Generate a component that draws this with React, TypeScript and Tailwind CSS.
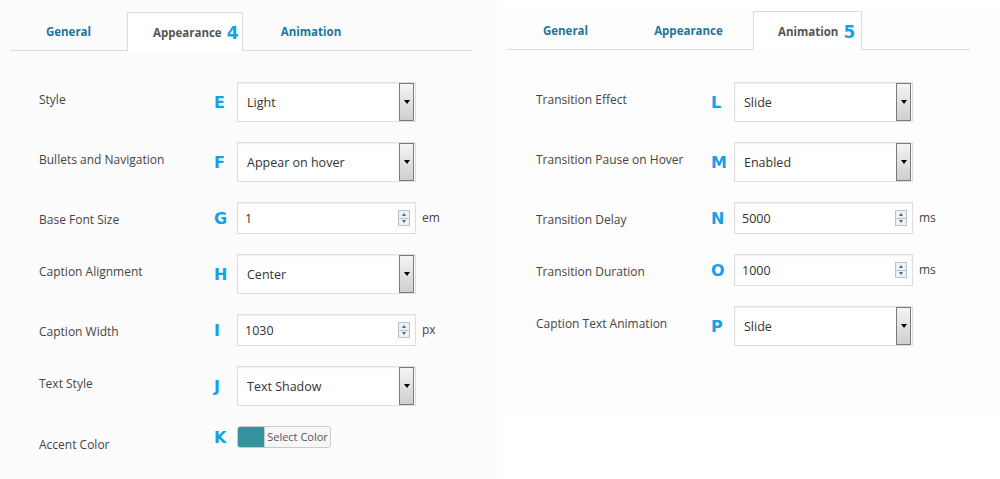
import React from "react";

type Row =
  | { label: string; letter: string; kind: "select"; value: string }
  | { label: string; letter: string; kind: "number"; value: string; unit: string }
  | { label: string; letter: string; kind: "color" };

const appearanceRows: Row[] = [
  { label: "Style", letter: "E", kind: "select", value: "Light" },
  { label: "Bullets and Navigation", letter: "F", kind: "select", value: "Appear on hover" },
  { label: "Base Font Size", letter: "G", kind: "number", value: "1", unit: "em" },
  { label: "Caption Alignment", letter: "H", kind: "select", value: "Center" },
  { label: "Caption Width", letter: "I", kind: "number", value: "1030", unit: "px" },
  { label: "Text Style", letter: "J", kind: "select", value: "Text Shadow" },
  { label: "Accent Color", letter: "K", kind: "color" },
];

const animationRows: Row[] = [
  { label: "Transition Effect", letter: "L", kind: "select", value: "Slide" },
  { label: "Transition Pause on Hover", letter: "M", kind: "select", value: "Enabled" },
  { label: "Transition Delay", letter: "N", kind: "number", value: "5000", unit: "ms" },
  { label: "Transition Duration", letter: "O", kind: "number", value: "1000", unit: "ms" },
  { label: "Caption Text Animation", letter: "P", kind: "select", value: "Slide" },
];

function SelectBox({ value }: { value: string }) {
  return (
    <div className="flex h-[40px] w-[179px] items-center border border-[#dedede] bg-white shadow-[inset_0_1px_2px_rgba(0,0,0,0.07)]">
      <span className="flex-1 pl-[9px] pt-[2px] text-[12.5px] text-[#333]">{value}</span>
      <div className="mr-px flex h-[38px] w-[15px] items-center justify-center border border-[#7a7a7a] bg-gradient-to-b from-[#f4f4f4] to-[#cfcfcf]">
        <div className="h-0 w-0 border-x-[3.5px] border-t-[4px] border-x-transparent border-t-black" />
      </div>
    </div>
  );
}

function NumberBox({ value, unit }: { value: string; unit: string }) {
  return (
    <div className="flex items-center">
      <div className="flex h-[32px] w-[179px] items-center border border-[#dedede] bg-white shadow-[inset_0_1px_2px_rgba(0,0,0,0.07)]">
        <span className="flex-1 pl-[7px] pt-[2px] text-[12.5px] text-[#333]">{value}</span>
        {/* spinner */}
        <div className="mr-[5px] flex h-[16px] w-[12px] flex-col border border-[#b9c3cc] bg-[#eef2f6]">
          <div className="flex flex-1 items-center justify-center border-b border-[#b9c3cc]">
            <div className="h-0 w-0 border-x-[2.5px] border-b-[3px] border-x-transparent border-b-[#4d6a85]" />
          </div>
          <div className="flex flex-1 items-center justify-center">
            <div className="h-0 w-0 border-x-[2.5px] border-t-[3px] border-x-transparent border-t-[#4d6a85]" />
          </div>
        </div>
      </div>
      <span className="ml-[6px] text-[12px] text-[#444]">{unit}</span>
    </div>
  );
}

function ColorButton() {
  return (
    <div className="flex h-[22px] w-[94px] overflow-hidden rounded-[3px] border border-[#c7cbcc] bg-[#f7f7f7]">
      <div className="h-full w-[26px] bg-[#3792a0]" />
      <span className="flex flex-1 items-center justify-center border-l border-[#c7cbcc] text-[11px] text-[#555]">
        Select Color
      </span>
    </div>
  );
}

function FieldRow({ row }: { row: Row }) {
  const h = row.kind === "select" ? "h-[40px]" : row.kind === "number" ? "h-[32px]" : "h-[22px]";
  return (
    <div className="flex items-start">
      <div
        className={`w-[175px] text-[12px] leading-[20px] text-[#444] ${
          row.kind === "color" ? "pt-[9px]" : "pt-[8px]"
        }`}
      >
        {row.label}
      </div>
      <div className={`flex w-[23px] items-center pt-[2px] ${h}`}>
        <span className="font-['DejaVu_Sans',sans-serif] text-[16px] font-bold text-[#16a0e6]">
          {row.letter}
        </span>
      </div>
      {row.kind === "select" && <SelectBox value={row.value} />}
      {row.kind === "number" && <NumberBox value={row.value} unit={row.unit} />}
      {row.kind === "color" && <ColorButton />}
    </div>
  );
}

function Tabs({
  tabs,
  active,
  num,
  top,
  pad,
}: {
  tabs: { name: string; w: string }[];
  active: number;
  num: string;
  top: string;
  pad: string;
}) {
  return (
    <div className={`ml-[10px] flex w-[463px] border-b border-[#dcdcdc] ${top}`}>
      {tabs.map((t, i) =>
        i === active ? (
          <div
            key={t.name}
            className={`-mb-px flex h-[39px] items-center border border-b-0 border-[#dcdcdc] bg-white pt-[2px] ${pad} ${t.w}`}
          >
            <span className="text-[11.5px] font-bold text-[#555]">{t.name}</span>
            <span className="ml-[5px] font-['DejaVu_Sans',sans-serif] text-[17px] font-bold leading-none text-[#16a0e6]">
              {num}
            </span>
          </div>
        ) : (
          <div key={t.name} className={`flex h-[38px] items-center justify-center pt-[2px] ${t.w}`}>
            <span className="text-[11.5px] font-bold text-[#21759b]">{t.name}</span>
          </div>
        )
      )}
    </div>
  );
}

export default function App() {
  return (
    <div className="flex h-[479px] w-[1000px] bg-white font-['Open_Sans',sans-serif]">
      {/* Appearance panel */}
      <div className="h-full w-[497px] bg-[#fcfcfc]">
        <Tabs
          top="mt-[12px]"
          pad="pl-[25px]"
          active={1}
          num="4"
          tabs={[
            { name: "General", w: "w-[117px]" },
            { name: "Appearance", w: "w-[116px]" },
            { name: "Animation", w: "w-[136px]" },
          ]}
        />
        <div className="ml-[39px] mt-[31px] flex flex-col gap-[20px]">
          {appearanceRows.map((r) => (
            <FieldRow key={r.label} row={r} />
          ))}
        </div>
      </div>

      {/* Animation panel */}
      <div className="h-full w-[503px]">
        <div className="h-[400px] bg-[#fdfdfd]">
          <Tabs
            top="mt-[11px]"
            pad="pl-[24px]"
            active={2}
            num="5"
            tabs={[
              { name: "General", w: "w-[117px]" },
              { name: "Appearance", w: "w-[129px]" },
              { name: "Animation", w: "w-[109px]" },
            ]}
          />
          <div className="ml-[39px] mt-[32px] flex flex-col gap-[20px]">
            {animationRows.map((r) => (
              <FieldRow key={r.label} row={r} />
            ))}
          </div>
        </div>
      </div>
    </div>
  );
}
